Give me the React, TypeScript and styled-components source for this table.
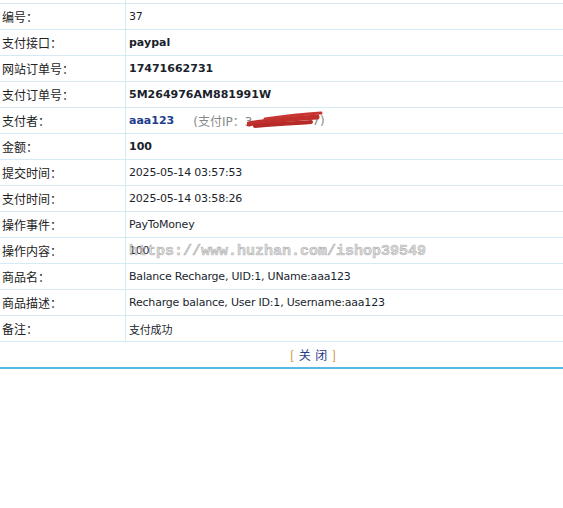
import React from "react";
import styled, { createGlobalStyle } from "styled-components";

const GlobalStyle = createGlobalStyle`
  html, body { margin: 0; padding: 0; background: #fff; }
  body { font-family: Tahoma, "DejaVu Sans", "Noto Sans CJK SC", sans-serif; font-size: 12px; color: #222; }
`;

const Page = styled.div`
  position: relative;
  width: 100%;
`;

const Table = styled.div`
  display: flex;
  flex-direction: column;
  width: 100%;
`;

const Row = styled.div<{ $h?: number }>`
  display: grid;
  grid-template-columns: 126px 1fr;
  height: ${(p) => p.$h ?? 26}px;
  box-sizing: border-box;
  border-bottom: 1px solid #d6eaf6;
`;

const Label = styled.div`
  box-sizing: border-box;
  border-right: 1px solid #d6eaf6;
  padding-left: 2px;
  display: flex;
  align-items: center;
  color: #222;
  font-family: "Noto Sans CJK SC", "DejaVu Sans", sans-serif;
  font-size: 12px;
`;

const Value = styled.div<{ $bold?: boolean; $blue?: boolean }>`
  padding-left: 3px;
  display: flex;
  align-items: center;
  white-space: nowrap;
  font-family: "DejaVu Sans", "Noto Sans CJK SC", sans-serif;
  font-size: 11px;
  letter-spacing: ${(p) => (p.$bold ? "0" : "-0.2px")};
  font-weight: ${(p) => (p.$bold ? 700 : 400)};
  color: ${(p) => (p.$blue ? "#1f3d8c" : "#1b1f2e")};
`;

const Ip = styled.span`
  margin-left: 19px;
  color: #888;
  font-weight: 400;
  font-size: 12px;
  letter-spacing: 0;
  font-family: "DejaVu Sans", "Noto Sans CJK SC", sans-serif;
  display: inline-flex;
  align-items: center;
  position: relative;
`;

const Gap = styled.span`
  display: inline-block;
  width: 60px;
`;

const Scribble = styled.svg`
  position: absolute;
  left: 54px;
  top: -2px;
`;

const CloseRow = styled.div`
  height: 27px;
  box-sizing: border-box;
  border-bottom: 2px solid #5ab9e2;
  display: flex;
  align-items: center;
  justify-content: center;
  padding-left: 64px;
  font-family: "Noto Sans CJK SC", "DejaVu Sans", sans-serif;
  font-size: 12px;
  white-space: pre;
  letter-spacing: 1px;
`;

const Bracket = styled.span`
  color: #c98a10;
`;

const CloseText = styled.span`
  color: #1f3d8c;
`;

const Watermark = styled.div`
  position: absolute;
  left: 129px;
  top: 243px;
  font-family: "Liberation Mono", "DejaVu Sans Mono", monospace;
  font-weight: 700;
  font-size: 15px;
  color: rgba(205, 205, 205, 0.7);
  -webkit-text-stroke: 0.6px rgba(120, 120, 120, 0.5);
  pointer-events: none;
  white-space: nowrap;
`;

type R = { label: string; value: React.ReactNode; bold?: boolean; blue?: boolean };

const rows: R[] = [
  { label: "编号：", value: "37" },
  { label: "支付接口：", value: "paypal", bold: true },
  { label: "网站订单号：", value: "17471662731", bold: true },
  { label: "支付订单号：", value: "5M264976AM881991W", bold: true },
  {
    label: "支付者：",
    bold: true,
    blue: true,
    value: (
      <>
        aaa123
        <Ip>
          (支付IP：3
          <Gap />
          7)
          <Scribble width="76" height="22" viewBox="0 0 76 22">
            <path d="M2 14 C18 11, 40 9, 70 7" stroke="#c0302c" strokeWidth="5" fill="none" strokeLinecap="round" />
            <path d="M8 16 C30 14, 50 13, 64 12" stroke="#b82a28" strokeWidth="4" fill="none" strokeLinecap="round" />
            <path d="M18 9 C38 6, 56 4, 74 3" stroke="#c83632" strokeWidth="3" fill="none" strokeLinecap="round" />
          </Scribble>
        </Ip>
      </>
    ),
  },
  { label: "金额：", value: "100", bold: true },
  { label: "提交时间：", value: "2025-05-14 03:57:53" },
  { label: "支付时间：", value: "2025-05-14 03:58:26" },
  { label: "操作事件：", value: "PayToMoney" },
  { label: "操作内容：", value: "100" },
  { label: "商品名：", value: "Balance Recharge, UID:1, UName:aaa123" },
  { label: "商品描述：", value: "Recharge balance, User ID:1, Username:aaa123" },
  { label: "备注：", value: "支付成功" },
];

export default function App() {
  return (
    <Page>
      <GlobalStyle />
      <Table>
        <Row $h={4}>
          <Label />
          <div />
        </Row>
        {rows.map((r) => (
          <Row key={r.label}>
            <Label>{r.label}</Label>
            <Value $bold={r.bold} $blue={r.blue}>
              {r.value}
            </Value>
          </Row>
        ))}
        <CloseRow>
          <Bracket>[</Bracket>
          <CloseText> 关 闭 </CloseText>
          <Bracket>]</Bracket>
        </CloseRow>
      </Table>
      <Watermark>https://www.huzhan.com/ishop39549</Watermark>
    </Page>
  );
}
